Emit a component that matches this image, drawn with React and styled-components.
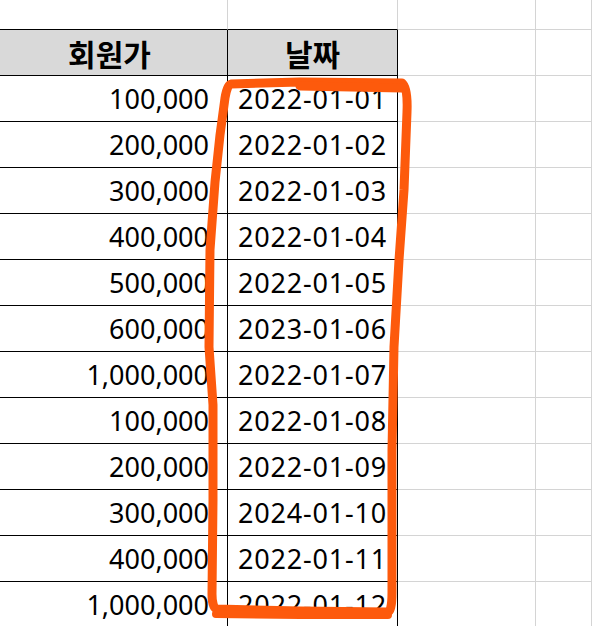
import styled, { createGlobalStyle } from "styled-components";

const GlobalStyle = createGlobalStyle`
  html, body {
    margin: 0;
    padding: 0;
    background: #fff;
    overflow: hidden;
  }
  body {
    font-family: "Noto Sans", "Noto Sans CJK KR", sans-serif;
  }
`;

// 데이터
const rows = [
  ["100,000", "2022-01-01"],
  ["200,000", "2022-01-02"],
  ["300,000", "2022-01-03"],
  ["400,000", "2022-01-04"],
  ["500,000", "2022-01-05"],
  ["600,000", "2023-01-06"],
  ["1,000,000", "2022-01-07"],
  ["100,000", "2022-01-08"],
  ["200,000", "2022-01-09"],
  ["300,000", "2024-01-10"],
  ["400,000", "2022-01-11"],
  ["1,000,000", "2022-01-12"],
];

const App = () => {
  return (
    <>
      <GlobalStyle />
      <Sheet>
        <Grid>
          {/* 위쪽 빈 줄 */}
          <Cell $bottom="#000" />
          <Cell $bottom="#000" />
          <Cell />
          <Cell />

          <HeadCell $pad="0 8px 0 0">회원가</HeadCell>
          <HeadCell>날짜</HeadCell>
          <Cell />
          <Cell />

          {rows.map(([price, date], i) => (
            <Row key={i}>
              <NumCell>{price}</NumCell>
              <DateCell>{date}</DateCell>
              <Cell />
              <Cell />
            </Row>
          ))}
        </Grid>

        <Marker viewBox="0 0 592 626" width="592" height="626">
          <path
            d="M 231 84 L 300 82 L 402 83 Q 408 88 407 112 L 404 190 L 399 260 L 394 347 L 392 450 L 392 592 Q 392 613 387 612 L 300 611 L 217 609 Q 212 608 212 594 L 213 500 L 213 405 L 209 347 L 210 250 L 215 182 L 220 135 L 225 98 Q 227 85 231 84 Z"
            fill="none"
            stroke="#fd5a0c"
            strokeWidth="9"
            strokeLinejoin="round"
            strokeLinecap="round"
          />
          <path
            d="M 300 86 L 402 88"
            fill="none"
            stroke="#fd5a0c"
            strokeWidth="9"
            strokeLinecap="round"
          />
          <path
            d="M 216 614 L 300 615 L 388 615"
            fill="none"
            stroke="#fd5a0c"
            strokeWidth="8"
            strokeLinecap="round"
          />
        </Marker>
      </Sheet>
    </>
  );
};

const Sheet = styled.div`
  position: relative;
  width: 592px;
  height: 626px;
  overflow: hidden;
`;

const Grid = styled.div`
  display: grid;
  grid-template-columns: 228px 170px 138px 1fr;
  grid-template-rows: 30px;
  grid-auto-rows: 46px;
`;

const Row = styled.div`
  display: contents;
`;

const Cell = styled.div`
  box-sizing: border-box;
  border-right: 1px solid ${(p) => p.$right || "#d4d4d4"};
  border-bottom: 1px solid ${(p) => p.$bottom || "#d4d4d4"};
`;

const HeadCell = styled.div`
  box-sizing: border-box;
  display: flex;
  align-items: center;
  justify-content: center;
  padding: ${(p) => p.$pad || "0"};
  background: #d9d9d9;
  border-right: 1px solid #000;
  border-bottom: 1px solid #000;
  font-family: "Noto Sans CJK KR", "Noto Sans", sans-serif;
  font-weight: 700;
  font-size: 30px;
  color: #000;
`;

const NumCell = styled.div`
  box-sizing: border-box;
  display: flex;
  align-items: center;
  justify-content: flex-end;
  padding-right: 18px;
  border-right: 1px solid #000;
  border-bottom: 1px solid #000;
  font-size: 27px;
  color: #000;
`;

const DateCell = styled(NumCell)`
  justify-content: center;
  padding-right: 0;
  letter-spacing: 0.8px;
`;

const Marker = styled.svg`
  position: absolute;
  left: 0;
  top: 0;
  pointer-events: none;
`;

export default App;
